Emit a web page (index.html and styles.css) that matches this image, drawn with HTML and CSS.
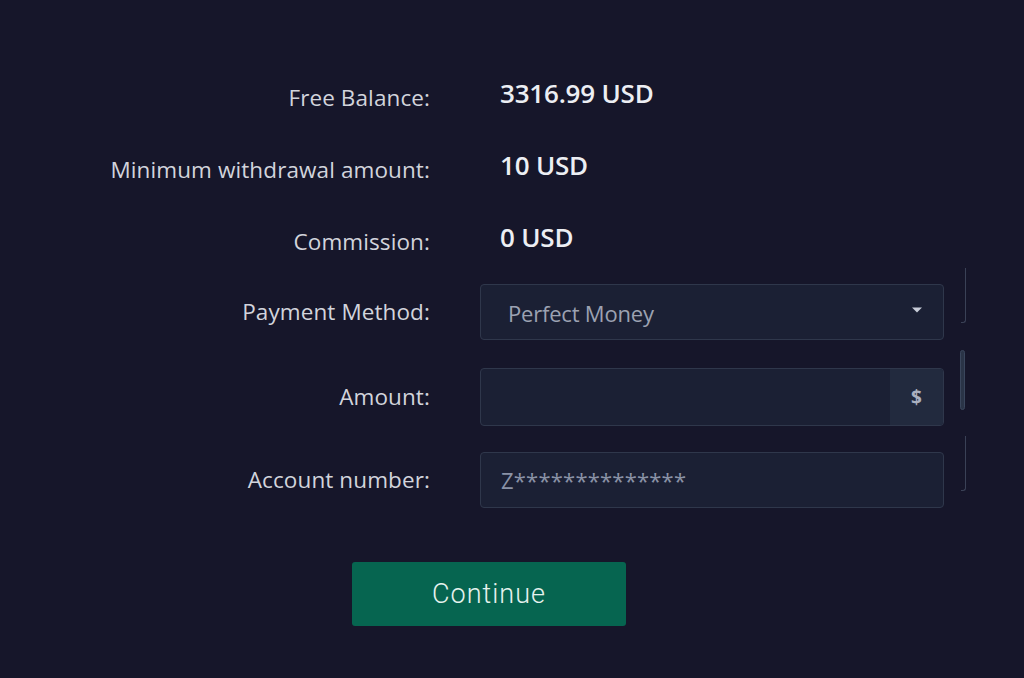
FILE: index.html
```html
<!DOCTYPE html>
<html lang="en">
<head>
<meta charset="utf-8">
<title>Withdrawal</title>
<link rel="stylesheet" href="styles.css">
</head>
<body>
<div class="page">
  <div class="form">
    <div class="row info">
      <div class="label">Free Balance:</div>
      <div class="value">3316.99 USD</div>
      <div class="side"></div>
    </div>
    <div class="row info">
      <div class="label">Minimum withdrawal amount:</div>
      <div class="value">10 USD</div>
      <div class="side"></div>
    </div>
    <div class="row info">
      <div class="label">Commission:</div>
      <div class="value">0 USD</div>
      <div class="side"></div>
    </div>
    <div class="row field first">
      <div class="label">Payment Method:</div>
      <div class="control select">
        <span class="select-text">Perfect Money</span>
        <svg class="caret" width="12" height="8" viewBox="0 0 12 8"><path d="M1 1.5h10L6 6.5z" fill="#c8ccd8"/></svg>
      </div>
      <div class="side"><div class="bracket"></div></div>
    </div>
    <div class="row field">
      <div class="label">Amount:</div>
      <div class="control amount">
        <div class="amount-input"></div>
        <div class="addon">$</div>
      </div>
      <div class="side"><div class="thumb"></div></div>
    </div>
    <div class="row field">
      <div class="label">Account number:</div>
      <div class="control account">Z**************</div>
      <div class="side"><div class="bracket"></div></div>
    </div>
    <div class="actions">
      <button class="btn">Continue</button>
    </div>
  </div>
</div>
</body>
</html>
```

FILE: styles.css
```css
html, body {
  margin: 0;
  padding: 0;
  background: #16162a;
}
body {
  width: 1024px;
  height: 678px;
  overflow: hidden;
  font-family: "Open Sans", "Noto Sans", sans-serif;
  color: #d4d6de;
}
.page {
  padding-top: 76px;
}
.form {
  display: flex;
  flex-direction: column;
}
.row {
  display: grid;
  grid-template-columns: 480px 464px 40px;
  align-items: center;
}
.row .label {
  padding-right: 50px;
  text-align: right;
  font-size: 22.5px;
  color: #d2d4dc;
  letter-spacing: 0.1px;
  white-space: nowrap;
}
.info {
  height: 40px;
  margin-bottom: 32px;
}
.info .value {
  padding-left: 20px;
  font-size: 26px;
  font-weight: 600;
  color: #eceef3;
  margin-top: -6px;
  letter-spacing: -0.2px;
}
.info .label {
  margin-top: 3px;
}
.field {
  height: 56px;
  margin-bottom: 28px;
}
.field .label {
  margin-top: -2px;
}
.field.first {
  margin-top: -8px;
}
.control {
  height: 56px;
  box-sizing: border-box;
  background: #1b2034;
  border: 1px solid #2f374b;
  border-radius: 4px;
}
.select {
  display: flex;
  align-items: center;
  justify-content: space-between;
  padding: 0 20px 0 27px;
}
.select-text {
  font-size: 22px;
  color: #9ca2b2;
  margin-top: 2px;
  letter-spacing: -0.2px;
}
.caret {
  margin-top: -4px;
}
.amount {
  display: flex;
  overflow: hidden;
  height: 58px;
}
.amount-input {
  flex: 1;
}
.addon {
  width: 53px;
  background: #222a3e;
  display: flex;
  align-items: center;
  justify-content: center;
  font-size: 19px;
  font-weight: 700;
  color: #aab0c0;
}
.account {
  display: flex;
  align-items: center;
  padding: 0 20px;
  font-size: 22px;
  color: #8a92a6;
  letter-spacing: 0.2px;
}
.side {
  align-self: stretch;
}
.bracket {
  margin-top: -16px;
  margin-left: 17px;
  width: 4px;
  height: 54px;
  border-right: 1px solid #3a4156;
  border-bottom: 1px solid #3a4156;
  border-bottom-right-radius: 3px;
}
.thumb {
  margin-top: -18px;
  margin-left: 16px;
  width: 3px;
  height: 58px;
  background: #2a3447;
  border: 1px solid #3a465c;
  border-radius: 3px;
}
.actions {
  margin-top: 26px;
  padding-left: 352px;
}
.btn {
  width: 274px;
  height: 64px;
  background: #066550;
  border: none;
  border-radius: 3px;
  color: #e6f2ee;
  font-family: Roboto, "Open Sans", sans-serif;
  font-weight: 300;
  font-size: 27px;
  letter-spacing: 1px;
  cursor: pointer;
}
```
